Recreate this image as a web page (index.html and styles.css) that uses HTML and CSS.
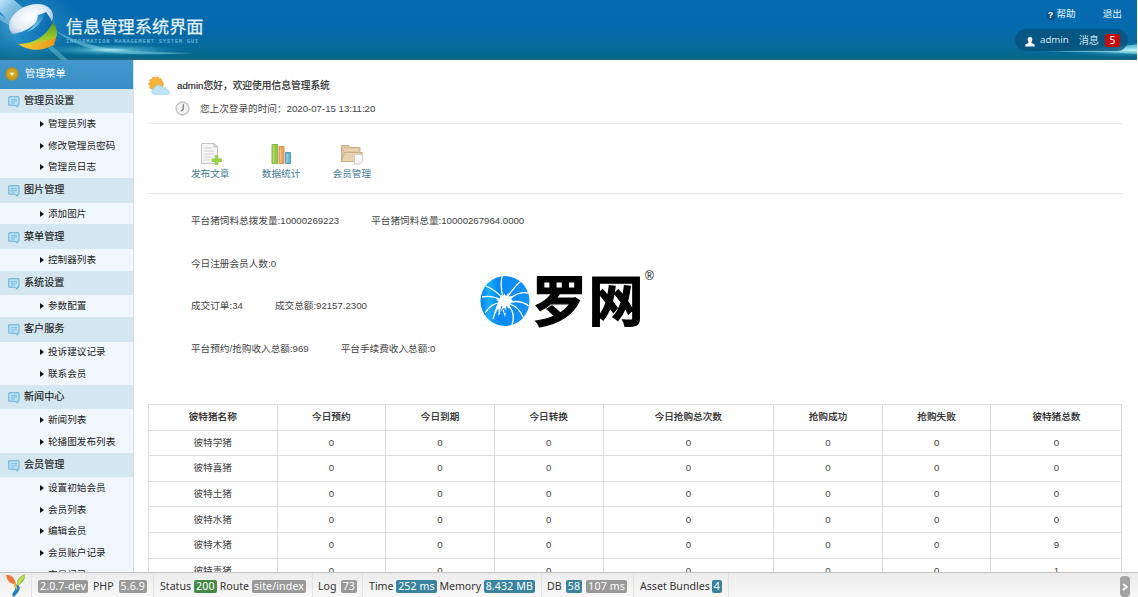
FILE: index.html
```html
<!DOCTYPE html>
<html lang="zh-CN">
<head>
<meta charset="utf-8">
<title>信息管理系统界面</title>
<link rel="stylesheet" href="styles.css">
</head>
<body>
<svg width="0" height="0" class="defs">
  <defs>
    <symbol id="bubble" viewBox="0 0 12 12"><path d="M.8.8h10.2v8.4H9.3v2L6.8 9.2h-6z" fill="#b9e1f3" stroke="#62b1d5"/><path d="M3 3.5h6M3 5.2h6M3 6.9h4" stroke="#72b9da" stroke-width=".8"/></symbol>
  </defs>
</svg>
<header class="header">
  <svg class="header-art" viewBox="0 0 1138 60">
    <defs>
      <radialGradient id="glow"><stop offset="0" stop-color="#e2ffff"/><stop offset=".3" stop-color="#69cae0" stop-opacity=".65"/><stop offset="1" stop-color="#2496c0" stop-opacity="0"/></radialGradient>
      <radialGradient id="haze"><stop offset="0" stop-color="#5fb4dc" stop-opacity=".75"/><stop offset="1" stop-color="#2a8fc6" stop-opacity="0"/></radialGradient>
      <linearGradient id="beam" x2="1" y2="1"><stop stop-color="#d2efff" stop-opacity=".9"/><stop offset="1" stop-color="#6dbbe2" stop-opacity=".3"/></linearGradient>
      <radialGradient id="ball" cx=".5" cy=".35" r=".6"><stop stop-color="#fff"/><stop offset=".6" stop-color="#e3ebf4"/><stop offset="1" stop-color="#a9c3dc"/></radialGradient>
      <linearGradient id="gold" x2="1"><stop stop-color="#f4cf2c"/><stop offset="1" stop-color="#e8951d"/></linearGradient>
      <linearGradient id="leaf" x2="0" y2="1"><stop stop-color="#4d9c25"/><stop offset="1" stop-color="#bcd92f"/></linearGradient>
      <linearGradient id="sea" x2="1"><stop stop-color="#2a93cd"/><stop offset="1" stop-color="#0868b0"/></linearGradient>
      <linearGradient id="sky" x2="0" y2="1"><stop stop-color="#1681c4"/><stop offset="1" stop-color="#8fdaf0"/></linearGradient>
    </defs>
    <ellipse cx="22" cy="26" rx="62" ry="42" fill="url(#haze)"/>
    <path d="M0 0h14l14 12-14 14L0 12z" fill="url(#beam)"/>
    <path d="M0 14 14 24v4L0 20z" fill="#a5daf2" opacity=".5"/>
    <ellipse cx="110" cy="50" rx="72" ry="6" fill="url(#glow)"/>
    <path d="M56 31Q84 46 119 50Q151 52 195 53Q137 56 105 52Q74 46 56 31z" fill="#86d5e5" opacity=".5"/>
    <path d="M52 46 68 60h-7L48 48z" fill="#77c9de" opacity=".45"/>
    <path d="M9 30Q17 50 36 50L55 42 56 30 52 20z" fill="url(#sea)"/>
    <ellipse cx="31" cy="21" rx="23" ry="15.5" transform="rotate(-24 31 21)" fill="url(#ball)"/>
    <path d="M12 34Q32 32 42 14L46 12Q50 17 53 24Q42 38 22 42Q15 39 12 34z" fill="url(#sea)"/>
    <path d="M27 32Q37 25 38 15l7-2Q41 27 27 32z" fill="url(#sky)"/>
    <path d="M53 22Q60 33 55 40 38 45 19 44 43 43 53 22z" fill="url(#leaf)"/>
    <path d="M18 44Q38 45 56 37L54 45Q35 55 18 44z" fill="url(#gold)"/>
    <ellipse cx="1134" cy="50" rx="76" ry="7" fill="url(#glow)"/>
    <path d="M1045 52Q1100 50 1138 44V54Q1101 51 1045 52z" fill="#b7f7ff" opacity=".5"/>
  </svg>
  <div class="brand"><h1>信息管理系统界面</h1><p>INFORMATION MANAGEMENT SYSTEM GUI</p></div>
  <div class="account">
    <nav class="links"><span class="help"><i>?</i>帮助</span><span>退出</span></nav>
    <div class="pill"><svg width="10" height="10" viewBox="0 0 10 10"><path d="M5 0c2.8 0 2.8 3 1.5 5v1L9.7 7.5V9.5H.3V7.5L3.5 6V5C2.2 3 2.2 0 5 0z" fill="#fff"/></svg><span class="user">admin</span><span>消息</span><b>5</b></div>
  </div>
</header>
<div class="layout">
  <aside class="sidebar">
    <h2><svg width="14" height="14" viewBox="0 0 14 14"><circle cx="7" cy="7" r="6.7" fill="#b9901b"/><circle cx="7" cy="7" r="5" fill="#cda326"/><path d="M4.3 5.7h5.4L7 8.7z" fill="#fff6d5"/></svg>管理菜单</h2>
    <h3><svg><use href="#bubble"/></svg>管理员设置</h3>
    <ul><li>管理员列表</li><li>修改管理员密码</li><li>管理员日志</li></ul>
    <h3><svg><use href="#bubble"/></svg>图片管理</h3>
    <ul><li>添加图片</li></ul>
    <h3><svg><use href="#bubble"/></svg>菜单管理</h3>
    <ul><li>控制器列表</li></ul>
    <h3><svg><use href="#bubble"/></svg>系统设置</h3>
    <ul><li>参数配置</li></ul>
    <h3><svg><use href="#bubble"/></svg>客户服务</h3>
    <ul><li>投诉建议记录</li><li>联系会员</li></ul>
    <h3><svg><use href="#bubble"/></svg>新闻中心</h3>
    <ul><li>新闻列表</li><li>轮播图发布列表</li></ul>
    <h3><svg><use href="#bubble"/></svg>会员管理</h3>
    <ul><li>设置初始会员</li><li>会员列表</li><li>编辑会员</li><li>会员账户记录</li><li>交易记录</li></ul>
  </aside>
  <main class="main">
    <section class="welcome">
      <div class="hello"><svg width="23" height="20" viewBox="0 0 23 20"><circle cx="8" cy="8" r="6.8" fill="#f8b437"/><circle cx="8" cy="8" r="6.8" fill="none" stroke="#f6a94a" stroke-width="1.6" stroke-dasharray="3 1"/><path d="M6 18.2a2.9 2.9 0 0 1 .2-5.7 4.6 4.6 0 0 1 8.6-.6 3.4 3.4 0 0 1 4.5 2.2c3.3.4 3 4.1.3 4.1z" fill="#bfe6f8" stroke="#9bd0ea" stroke-width=".8"/></svg><strong>admin您好，欢迎使用信息管理系统</strong></div>
      <div class="last"><svg width="15" height="15" viewBox="0 0 15 15"><circle cx="7.5" cy="7.5" r="6.4" fill="#f4f4f4" stroke="#c6c6c6" stroke-width="1.6"/><path d="M8.3 3.2v5L6 10.3" fill="none" stroke="#777" stroke-width="1.2"/></svg><span>您上次登录的时间：2020-07-15 13:11:20</span></div>
    </section>
    <section class="shortcuts">
      <a><svg width="24" height="24" viewBox="0 0 24 24"><path d="M3.5 1.5h13l3 3v17h-16z" fill="#f5f5f5" stroke="#c4c4c4"/><path d="M6 6h8M6 9h10M6 12h10M6 15h7M6 18h6" stroke="#d2d2d2"/><path d="M16 1.5v3.5h3.5" fill="#ddd" stroke="#c4c4c4"/><path d="M16.8 13h3.6v3.5H24v3.6h-3.6V23h-3.6v-2.9H13.5v-3.6h3.3z" fill="#9ccf4a"/></svg>发布文章</a>
      <a><svg width="24" height="24" viewBox="0 0 24 24"><path d="M3 2.5h5.5v19H3z" fill="#97c94a" stroke="#86b844"/><path d="M4.5 3v18" stroke="#b9df76"/><path d="M10 4.5h5V21.500H10z" fill="#e9a260" stroke="#d59355"/><path d="M11.5 6v15" stroke="#f8c48d"/><path d="M16.500 10.500H21.500V21.500h-5z" fill="#6bb4d2" stroke="#559fc0"/><path d="M18 12v9" stroke="#9edbed"/></svg>数据统计</a>
      <a><svg width="24" height="24" viewBox="0 0 24 24"><path d="M1.500 19.500v-16h7l1.500 2h10v14z" fill="#dfc6a0" stroke="#c9b088"/><path d="m1.500 19.500 3-9h18l-3 9z" fill="#e8d2af" stroke="#ccb088"/><path d="M4 8h14" stroke="#f4e4c8"/><path d="M14.500 12.500h8V19l-2.500 3h-5.500z" fill="#f9f9f7" stroke="#cfccc6"/></svg>会员管理</a>
    </section>
    <section class="stats">
      <p><span>平台猪饲料总拨发量:10000269223</span><span>平台猪饲料总量:10000267964.0000</span></p>
      <p><span>今日注册会员人数:0</span></p>
      <p><span>成交订单:34</span><span>成交总额:92157.2300</span></p>
      <p><span>平台预约/抢购收入总额:969</span><span>平台手续费收入总额:0</span></p>
    </section>
    <table class="grid">
      <colgroup><col class="c-name"><col class="c-day"><col class="c-day"><col class="c-day"><col class="c-count"><col class="c-day"><col class="c-day"><col class="c-total"></colgroup>
      <thead><tr><th>彼特猪名称</th><th>今日预约</th><th>今日到期</th><th>今日转换</th><th>今日抢购总次数</th><th>抢购成功</th><th>抢购失败</th><th>彼特猪总数</th></tr></thead>
      <tbody>
        <tr><td>彼特学猪</td><td>0</td><td>0</td><td>0</td><td>0</td><td>0</td><td>0</td><td>0</td></tr>
        <tr><td>彼特喜猪</td><td>0</td><td>0</td><td>0</td><td>0</td><td>0</td><td>0</td><td>0</td></tr>
        <tr><td>彼特土猪</td><td>0</td><td>0</td><td>0</td><td>0</td><td>0</td><td>0</td><td>0</td></tr>
        <tr><td>彼特水猪</td><td>0</td><td>0</td><td>0</td><td>0</td><td>0</td><td>0</td><td>0</td></tr>
        <tr><td>彼特木猪</td><td>0</td><td>0</td><td>0</td><td>0</td><td>0</td><td>0</td><td>9</td></tr>
        <tr><td>彼特毒猪</td><td>0</td><td>0</td><td>0</td><td>0</td><td>0</td><td>0</td><td>1</td></tr>
      </tbody>
    </table>
  </main>
</div>
<div class="watermark">
  <svg width="50" height="52" viewBox="0 0 50 52"><defs><linearGradient id="blue"><stop stop-color="#087ff5"/><stop offset=".18" stop-color="#16b0fa"/><stop offset=".35" stop-color="#0989f5"/><stop offset="1" stop-color="#1292fc"/></linearGradient></defs><ellipse cx="25" cy="26" rx="24.500" ry="25" fill="url(#blue)"/><g fill="none" stroke="#fff" stroke-width="1.300"><path d="M23 22Q20 12 22 1M28 21Q36 10 40 7M30 24Q38 16 48 18M31 27Q41 25 49 31M30 29Q39 32 43 42M28 30Q36 38 32 50M22 23Q17 16 6 11M21 25Q12 20 2 22M22 28Q12 27 5 38M21 30Q16 33 13 44"/></g><path d="m21 20 2.500 1.500.5-3 2 2.500 2.500-3 .5 3.500 3-.5-1 3 2 2-3 3-1 5-2-2-2 10-2.500-7-4 6v-8l-5 6 5-13-3-1 4-1z" fill="#fff"/><path d="m22 31-2 7 4-5 1 5 2-7" fill="none" stroke="#0989f5"/></svg>
  <span class="name">罗网</span><span class="reg">®</span>
</div>
<footer class="debug">
  <div class="yii"><svg width="22" height="24" viewBox="0 0 22 24"><path d="M1 2Q9 1 11 11 3 12 1 2z" fill="#ed7a38"/><path d="M20 1Q21 9 12 13 11 4 20 1z" fill="#8fc33e"/><path d="M20 2Q17 9 12 13 10 7 20 2z" fill="#c8dc64"/><path d="M10 11Q20 13 9 24 5 22 10 17z" fill="#227fc1"/><path d="M9 10Q13 12 12 17 8 14 9 10z" fill="#efb442"/></svg></div>
  <div class="b1"><em>2.0.7-dev</em><span>PHP</span><em>5.6.9</em></div>
  <div class="b2"><span>Status</span><em class="ok">200</em><span>Route</span><em>site/index</em></div>
  <div class="b3"><span>Log</span><em>73</em></div>
  <div class="b4"><span>Time</span><em class="info">252 ms</em><span>Memory</span><em class="info">8.432 MB</em></div>
  <div class="b5"><span>DB</span><em class="info">58</em><em>107 ms</em></div>
  <div class="b6"><span>Asset Bundles</span><em class="info">4</em></div>
  <button><svg width="6" height="8" viewBox="0 0 6 8"><path d="m1 1 4 3-4 3" fill="none" stroke="#fff" stroke-width="1.600"/></svg></button>
</footer>
</body>
</html>
```
FILE: styles.css
```css
* { box-sizing: border-box; }
html, body { height: 100%; }
body {
  margin: 0; overflow: hidden; background: #fff; color: #444;
  font: 9.65px/14px "Liberation Sans", "Noto Sans CJK SC", sans-serif;
}
h1, h2, h3, p, ul { margin: 0; padding: 0; font-weight: 400; }
svg { display: block; flex: none; }
.defs { position: absolute; }

.header {
  position: relative; height: 60px; width: 1137px; display: flex; justify-content: space-between;
  background: linear-gradient(#056aaf 0, #046aae 45%, #076b9e 75%, #06678a 96%, #25647a);
  color: #e7f5fd; overflow: hidden;
}
.header-art { position: absolute; left: 0; top: 0; width: 1138px; height: 60px; }
.brand { position: relative; padding: 15px 0 0 66px; }
.brand h1 { font-size: 17.2px; line-height: 24px; color: #e3f1fa; -webkit-text-stroke: .25px #e3f1fa; }
.brand p { font: 5.2px/6px "Liberation Mono", monospace; letter-spacing: .92px; color: #65b5d9; white-space: nowrap; -webkit-text-stroke: .2px #65b5d9; }
.account { position: relative; padding: 7px 9px 0 0; }
.links { display: flex; justify-content: flex-end; gap: 27px; padding-right: 6px; }
.help { display: flex; gap: 2px; }
.help i { width: 8px; height: 9px; margin-top: 4px; border-radius: 5px; background: #174e7c; font: bold 9px/9px "Liberation Sans", sans-serif; text-align: center; color: #fff; }
.pill { display: flex; align-items: center; width: 113px; height: 22px; margin: 8px 0 0 auto; padding: 0 8px 0 10px; border-radius: 11px; background: #07517acc; font: 10.2px/20px "Noto Sans", "Noto Sans CJK SC", sans-serif; color: #cfe4ee; }
.pill svg { margin-top: 4px; }
.pill .user { margin: 0 auto 0 5px; font-size: 9.6px; }
.pill b { width: 15px; height: 13px; margin-left: 6px; border-radius: 2px; background: #c20d0d; color: #fff; font-weight: 400; line-height: 13px; text-align: center; }

.layout { display: flex; height: 537px; overflow: hidden; }
.sidebar { width: 134px; flex: none; background: #eff7fd; border-right: 1px solid #cfe0eb; }
.sidebar h2 { display: flex; align-items: center; gap: 6px; height: 28.5px; padding: 0 0 1px 5px; background: linear-gradient(#4298cd, #3890c6); color: #fff; font-size: 10.2px; }
.sidebar h3 { display: flex; align-items: center; gap: 4px; height: 24.65px; padding: 0 0 0 8px; background: #d4e6ef; color: #222; font-size: 10.1px; -webkit-text-stroke: .15px #222; }
.sidebar h3 svg { width: 12px; height: 12px; margin-top: 2px; }
.sidebar ul { list-style: none; color: #222; }
.sidebar li { display: flex; align-items: center; gap: 4px; height: 21.65px; padding: 0 0 0 40px; }
.sidebar li::before { content: ""; border: solid transparent; border-width: 3px 0 3px 4px; border-left-color: #111; }

.main { flex: 1; padding: 0 16px 0 14px; }
.welcome { height: 64px; padding-top: 15px; border-bottom: 1px solid #e8e8e8; }
.hello { display: flex; align-items: center; gap: 6px; height: 21px; color: #222; }
.hello strong { font-weight: 400; font-size: 9.72px; -webkit-text-stroke: .15px #222; }
.last { display: flex; align-items: center; gap: 10px; height: 25px; padding-left: 27px; }
.shortcuts { display: flex; gap: 32.3px; height: 69.5px; padding: 18px 0 0 43px; border-bottom: 1px solid #e8e8e8; color: #417993; }
.shortcuts a { display: flex; flex-direction: column; align-items: center; gap: 1px; }
.stats { height: 210.5px; padding: 20.5px 0 0 43px; }
.stats p { display: flex; gap: 32px; height: 42.7px; }
.grid { width: 974px; border-collapse: collapse; table-layout: fixed; text-align: center; }
.c-name { width: 128.5px; }
.c-day { width: 108.7px; }
.c-count { width: 170.5px; }
.c-total { width: 131px; }
.grid th, .grid td { height: 25.6px; padding: 0; border: 1px solid #dcdcdc; }
.grid th { color: #222; font-weight: 400; -webkit-text-stroke: .2px #222; }

.watermark { position: absolute; left: 480px; top: 275px; display: flex; color: #000; }
.watermark .name { margin: -10px 0 0 2px; font: bold 55px/64px "Noto Sans CJK SC", sans-serif; letter-spacing: 1.5px; -webkit-text-stroke: 1.2px #000; }
.watermark .reg { margin: -6px 0 0 0; font-size: 12px; }

.debug {
  position: fixed; left: 0; right: 0; bottom: 0; height: 25px; display: flex;
  border-top: 1px solid #c4c4c4; background: linear-gradient(#ececec, #f8f8f8);
  font: 10.6px/14px "Noto Sans", sans-serif; color: #333; white-space: nowrap;
}
.debug > div { display: flex; align-items: center; justify-content: space-between; padding: 2px 6px 0; border-right: 1px solid #e2e2e2; }
.debug .yii { width: 32px; padding: 0 0 0 5px; }
.debug .b1 { width: 122px; }
.debug .b2 { width: 159px; }
.debug .b3 { width: 50px; padding-right: 5px; padding-left: 5px; }
.debug .b4 { width: 179px; }
.debug .b5 { width: 92px; padding-left: 5px; }
.debug .b6 { width: 95px; }
.debug em { height: 13px; padding: 0 2px; border-radius: 2px; background: #999; color: #fff; font-style: normal; line-height: 13px; letter-spacing: .12px; }
.debug .ok { background: #468847; }
.debug .info { background: #39839f; }
.debug button { display: flex; align-items: center; justify-content: center; width: 10px; height: 21px; margin: 3px 8px 0 auto; padding: 0; border: 0; border-radius: 4px; background: #a3a3a3; }
```
